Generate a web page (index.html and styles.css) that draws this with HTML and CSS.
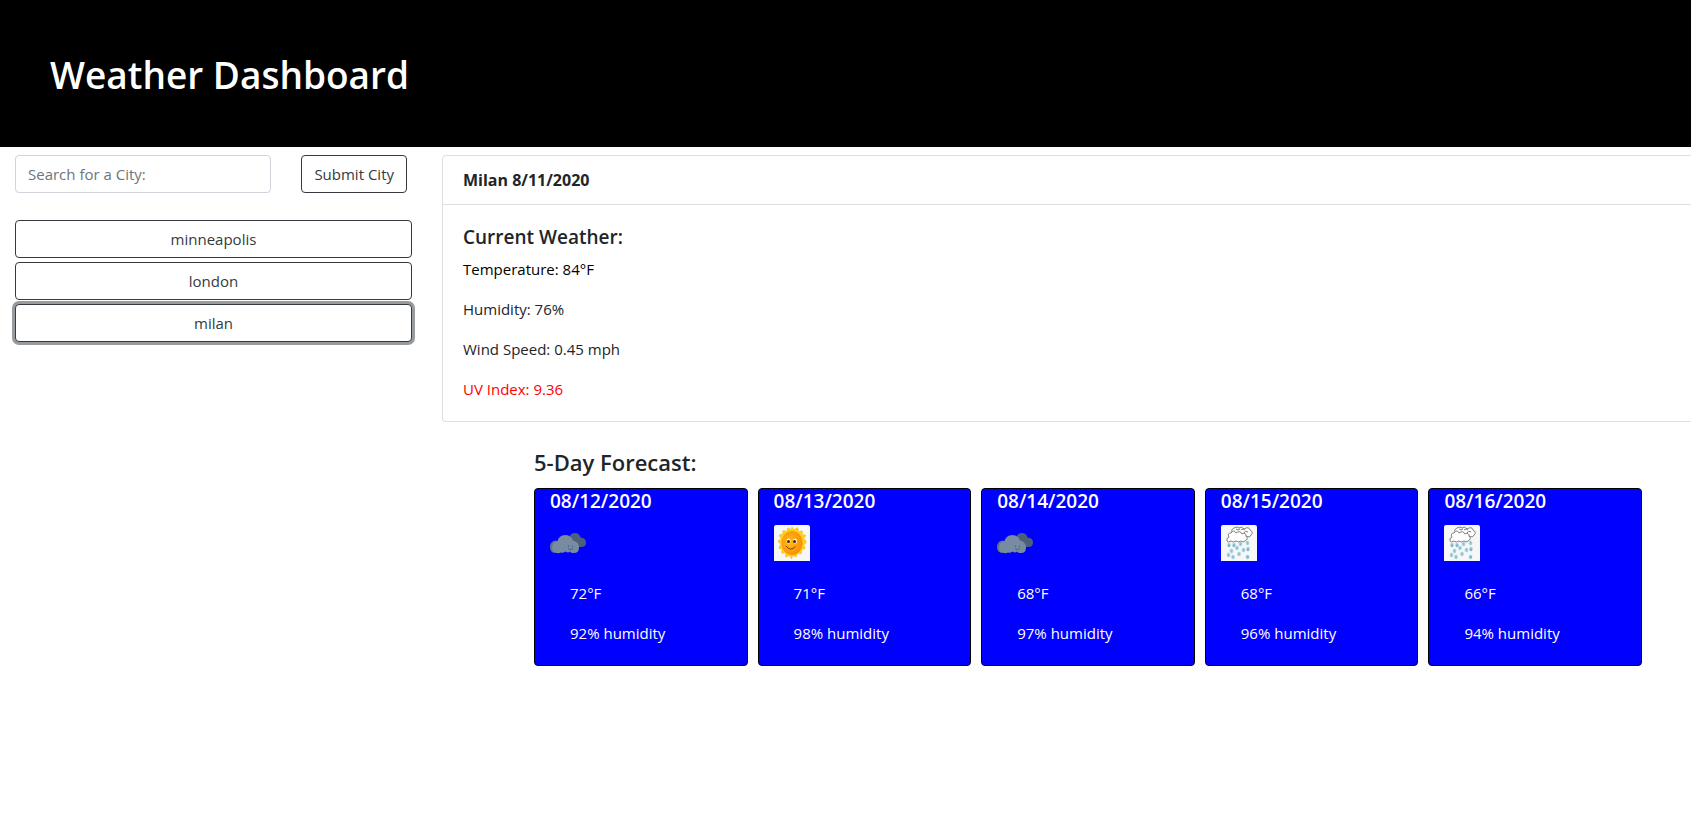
FILE: index.html
```html
<!DOCTYPE html>
<html lang="en">
<head>
<meta charset="utf-8">
<meta name="viewport" content="width=device-width, initial-scale=1">
<title>Weather Dashboard</title>
<link rel="stylesheet" href="styles.css">
</head>
<body>
<svg class="sprite" aria-hidden="true">
  <symbol id="clouds" viewBox="0 0 36 36">
    <path fill="#4d607a" d="M17 17 Q17 13 19.500 11.500 Q21 8 25 8 Q29.500 8 30.500 12.500 Q36 13 36 17.500 Q36 22 31 22 H20Z"/>
    <path fill="#617386" d="M0 22 Q0 16 6 15.500 L10 18 V28 H6 Q0 28 0 22Z"/>
    <path fill="#778ba1" d="M2 23 Q2 17 7.500 16 Q9 10.500 15 10 Q21 10 23 15.500 Q29 17 29 22.500 Q29 28 24 28 Q21 28.500 20 26.500 Q18 28.500 15.500 26.500 Q13 28.500 11 27.500 Q8 29 6 27.500 Q2 27 2 23Z"/>
    <path fill="none" stroke="#4d6188" stroke-width="1" d="M18.500 20.500 V22 M22.500 20.500 V22 M18 23.500 Q20.500 26 23 23.500"/>
  </symbol>
  <symbol id="sun" viewBox="0 0 36 36">
    <radialGradient id="sun-face" cx="40%" cy="45%" r="65%">
      <stop offset="0" stop-color="#ffbd16"/>
      <stop offset="1" stop-color="#f58b05"/>
    </radialGradient>
    <path fill="#f7f7f7" d="M2 0 H34 Q36 0 36 2 V36 H0 V2 Q0 0 2 0Z"/>
    <path fill="#ffd016" stroke="#f1b51c" stroke-width=".5" d="M18 2 L20 5 Q23 2 24 3 L24.500 7 Q28 5 28.500 6.500 L28 10 Q32 9 31.500 11 L29.500 14 Q33 15 32 18 L29.500 20 Q32 23 30.500 24 L27.500 24.500 Q28 29 26.500 29 L23.500 28 Q23 32 21 32 L19 30 L17.500 34 L15.500 30 Q12 33 11.500 31.500 L11.500 27.500 Q7 29 7.500 27 L8.500 24 Q4 24 5 22 L7 19 Q3 17 4.500 15.500 L7.500 14 Q4 10 6 9.500 L9 9.500 Q8 5 10 5.500 L13 7 Q13 2 15 3 L16.500 5Z"/>
    <ellipse cx="18" cy="18" rx="10.500" ry="12" fill="url(#sun-face)"/>
    <ellipse cx="14.500" cy="16" rx="2" ry="2.500" fill="#fff3db"/>
    <ellipse cx="21" cy="16" rx="2" ry="2.500" fill="#fff3db"/>
    <circle cx="14.500" cy="16.500" r="1.500" fill="#45201b"/>
    <circle cx="20.500" cy="16.500" r="1.500" fill="#45201b"/>
    <path fill="none" stroke="#8d390b" stroke-width="1" d="M12 21 Q16.500 27 21.500 21.500"/>
  </symbol>
  <symbol id="rain" viewBox="0 0 36 36">
    <path fill="#f7f7f7" d="M2 0 H34 Q36 0 36 2 V36 H0 V2 Q0 0 2 0Z"/>
    <g fill="#fff" stroke="#707070" stroke-width=".9">
      <path d="M12 8 Q9 5 13 3 Q16 1 18 3 Q21 1 23 4 Q28 1 29 5 Q33 7 30 10 Q29 13 25 11 L12 9Z"/>
      <path d="M20 5 Q22 3 24 5 M15 4 Q17 6 19 4 M23 8 Q24 5 27 7"/>
      <path d="M6 16 Q5 13 8 12 Q6 8 10 8 Q13 4 15 8 Q19 5 21 9 Q25 7 25 11 Q28 14 24 16 Q22 18 20 16 Q17 18 15 16 Q12 18 10 16 Q7 18 6 16Z"/>
    </g>
    <g fill="#8fc0d2" stroke="#b4dae5" stroke-width=".8">
      <ellipse cx="8" cy="20" rx="1.500" ry="2"/><ellipse cx="13" cy="20" rx="1.500" ry="2"/>
      <ellipse cx="19.500" cy="19" rx="1.500" ry="2"/><ellipse cx="26.500" cy="18" rx="1.500" ry="2"/>
      <ellipse cx="16" cy="23" rx="1.500" ry="2"/><ellipse cx="22.500" cy="25" rx="1.500" ry="2"/>
      <ellipse cx="27" cy="24" rx="1.500" ry="2"/><ellipse cx="10.500" cy="26" rx="1.500" ry="2"/>
      <ellipse cx="7.500" cy="30" rx="1.500" ry="2"/><ellipse cx="12" cy="32" rx="1.500" ry="2"/>
      <ellipse cx="18" cy="29" rx="1.500" ry="2"/><ellipse cx="26.500" cy="32" rx="1.500" ry="2"/>
    </g>
    <g fill="#5c9cb6"><circle cx="13" cy="21" r=".8"/><circle cx="8" cy="21" r=".8"/><circle cx="27" cy="25" r=".8"/><circle cx="27" cy="32" r=".8"/></g>
  </symbol>
</svg>

<header class="banner"><h1>Weather Dashboard</h1></header>

<div class="layout">
  <aside class="sidebar">
    <form class="search">
      <input class="search-input" type="text" placeholder="Search for a City:" aria-label="Search for a City">
      <button class="btn" type="button">Submit City</button>
    </form>
    <div class="history">
      <button class="btn" type="button">minneapolis</button>
      <button class="btn" type="button">london</button>
      <button class="btn btn-active" type="button">milan</button>
    </div>
  </aside>

  <main class="content">
    <section class="current">
      <div class="current-header">Milan 8/11/2020</div>
      <div class="current-body">
        <h2>Current Weather:</h2>
        <p class="temperature">Temperature: 84°F</p>
        <p>Humidity: 76%</p>
        <p>Wind Speed: 0.45 mph</p>
        <p class="uv-high">UV Index: 9.36</p>
      </div>
    </section>

    <section class="forecast">
      <h2>5-Day Forecast:</h2>
      <div class="days">
        <article class="day">
          <h3>08/12/2020</h3>
          <svg class="icon" role="img" aria-label="Cloudy"><use href="#clouds"/></svg>
          <div class="day-body"><p>72°F</p><p>92% humidity</p></div>
        </article>
        <article class="day">
          <h3>08/13/2020</h3>
          <svg class="icon" role="img" aria-label="Sunny"><use href="#sun"/></svg>
          <div class="day-body"><p>71°F</p><p>98% humidity</p></div>
        </article>
        <article class="day">
          <h3>08/14/2020</h3>
          <svg class="icon" role="img" aria-label="Cloudy"><use href="#clouds"/></svg>
          <div class="day-body"><p>68°F</p><p>97% humidity</p></div>
        </article>
        <article class="day">
          <h3>08/15/2020</h3>
          <svg class="icon" role="img" aria-label="Rain"><use href="#rain"/></svg>
          <div class="day-body"><p>68°F</p><p>96% humidity</p></div>
        </article>
        <article class="day">
          <h3>08/16/2020</h3>
          <svg class="icon" role="img" aria-label="Rain"><use href="#rain"/></svg>
          <div class="day-body"><p>66°F</p><p>94% humidity</p></div>
        </article>
      </div>
    </section>
  </main>
</div>
</body>
</html>
```
FILE: styles.css
```css
* { box-sizing: border-box; }

body {
  margin: 0;
  background: #fff;
  color: #212529;
  font-family: "Open Sans", "Noto Sans", sans-serif;
  font-size: 15px;
  line-height: 24px;
}

h1, h2, h3, p { margin: 0; }

.sprite { position: absolute; width: 0; height: 0; }

.banner {
  padding: 51px 50px 48px;
  background: #000;
  color: #fff;
}

.banner h1 {
  font-size: 37px;
  font-weight: 600;
  line-height: 48px;
}

.layout {
  display: grid;
  grid-template-columns: 427px minmax(0, 1fr);
  padding-top: 8px;
}

.sidebar { padding: 0 15px; }

.search {
  display: flex;
  gap: 30px;
  padding-right: 5px;
}

.search-input {
  flex: 1;
  min-width: 0;
  height: 38px;
  padding: 6px 12px;
  border: 1px solid #ced4da;
  border-radius: 4px;
  color: #495057;
  font: inherit;
}

.search-input::placeholder { color: #6c757d; opacity: 1; }

.btn {
  height: 38px;
  padding: 6px 12px;
  border: 1px solid #343a40;
  border-radius: 4px;
  background: #fff;
  color: #343a40;
  font: inherit;
  line-height: 24px;
}

.btn-active { box-shadow: 0 0 0 3px #999c9f; }

.history {
  display: flex;
  flex-direction: column;
  gap: 4px;
  margin-top: 27px;
}

.content { padding-left: 15px; }

.current {
  border: 1px solid #dfdfdf;
  border-right: 0;
  border-radius: 4px 0 0 4px;
}

.current-header {
  padding: 12px 20px;
  border-bottom: 1px solid #dfdfdf;
  font-size: 16px;
  font-weight: 700;
}

.current-body {
  display: flex;
  flex-direction: column;
  gap: 16px;
  padding: 20px;
}

.current-body h2 {
  margin-bottom: -8px;
  font-size: 19px;
  font-weight: 600;
}

.temperature { color: #000; }
.uv-high { color: #f00; }

.forecast { padding: 26px 49px 0 92px; }

.forecast h2 {
  margin-bottom: 11px;
  font-size: 22px;
  font-weight: 600;
  line-height: 29px;
}

.days {
  display: grid;
  grid-template-columns: repeat(5, minmax(0, 1fr));
  gap: 10px;
}

.day {
  padding-left: 15px;
  border: 1px solid #000;
  border-radius: 4px;
  background: #00f;
  color: #fff;
}

.day h3 {
  margin-bottom: 12px;
  font-size: 19px;
  font-weight: 600;
}

.icon { display: block; width: 36px; height: 36px; }

.day-body {
  display: flex;
  flex-direction: column;
  gap: 16px;
  padding: 20px;
}
```
